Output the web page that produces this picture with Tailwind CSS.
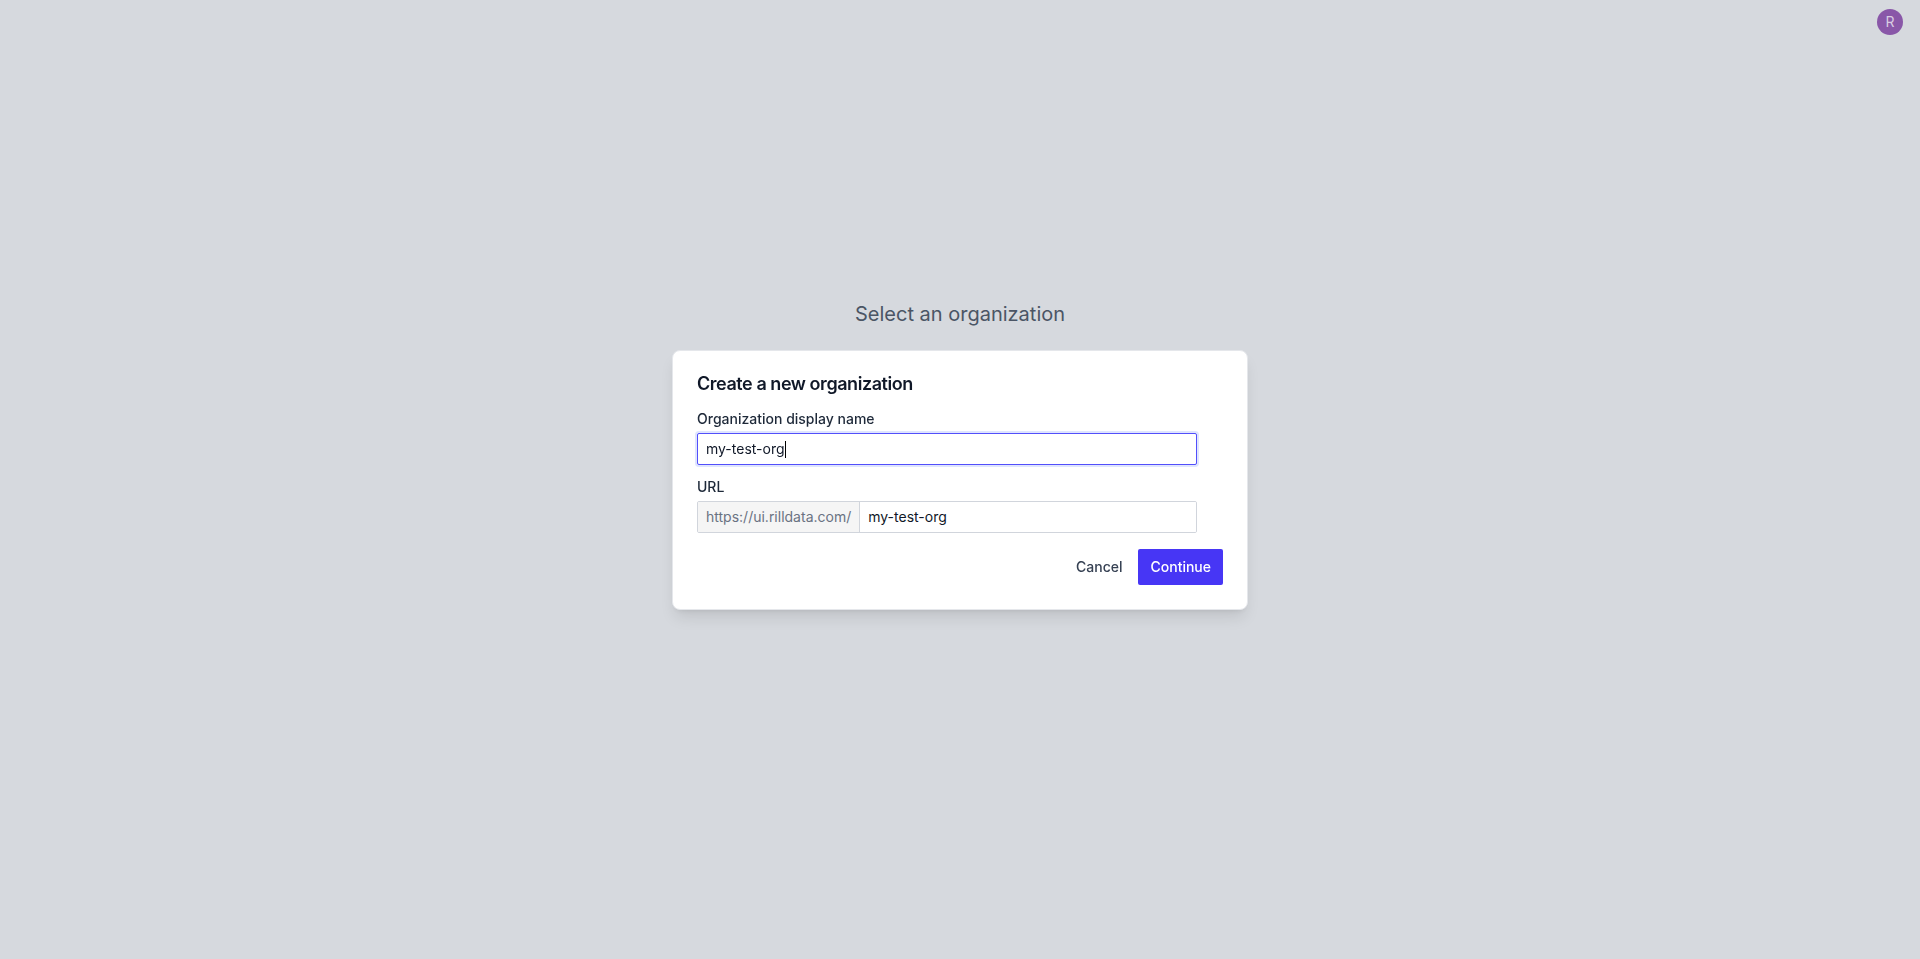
<!DOCTYPE html>
<html lang="en">
<head>
<meta charset="utf-8">
<meta name="viewport" content="width=device-width, initial-scale=1">
<title>Create a new organization</title>
<script src="https://cdn.jsdelivr.net/npm/@tailwindcss/browser@4"></script>
</head>
<body class="flex min-h-screen flex-col bg-[#d6d9de] font-['Inter',sans-serif] text-sm text-gray-800 antialiased">
  <header class="flex h-11 items-center justify-end px-[17px]">
    <button type="button" aria-label="Account" class="flex size-[26px] items-center justify-center rounded-full bg-[#8957a8] text-sm text-[#d9cce2]">R</button>
  </header>
  <main class="flex flex-col items-center pt-64">
    <h1 class="text-xl text-[#4b5565]">Select an organization</h1>
  </main>

  <div class="fixed inset-0 flex items-center justify-center">
    <form role="dialog" aria-labelledby="dialog-title" class="flex w-full max-w-xl flex-col rounded-lg border border-gray-200 bg-white p-6 shadow-lg">
      <h2 id="dialog-title" class="text-lg leading-none font-semibold tracking-tight text-gray-900">Create a new organization</h2>
      <div class="mt-4 flex max-w-[500px] flex-col gap-3">
        <div class="flex flex-col gap-1">
          <label for="display-name" class="font-medium">Organization display name</label>
          <div class="relative">
            <input id="display-name" type="text" value="my-test-org" class="block h-8 w-full rounded-xs border border-[#524ffb] bg-white px-2 text-gray-900 ring-2 ring-[#dfe5fe] outline-none">
            <span class="absolute top-2 left-[88px] h-[17px] w-px bg-black"></span>
          </div>
        </div>
        <div class="flex flex-col gap-1">
          <label for="org-url" class="font-medium">URL</label>
          <div class="flex h-8 overflow-hidden rounded-xs border border-gray-300">
            <span class="flex items-center border-r border-gray-300 bg-neutral-100 px-2 text-gray-500">https://ui.rilldata.com/</span>
            <input id="org-url" type="text" value="my-test-org" class="min-w-0 flex-1 bg-white px-2 text-gray-900 outline-none">
          </div>
        </div>
      </div>
      <div class="mt-4 flex justify-end gap-1">
        <button type="button" class="h-9 px-3 font-medium text-gray-700">Cancel</button>
        <button type="submit" class="h-9 rounded-xs bg-[#4736f5] px-3 font-medium text-white">Continue</button>
      </div>
    </form>
  </div>
</body>
</html>
